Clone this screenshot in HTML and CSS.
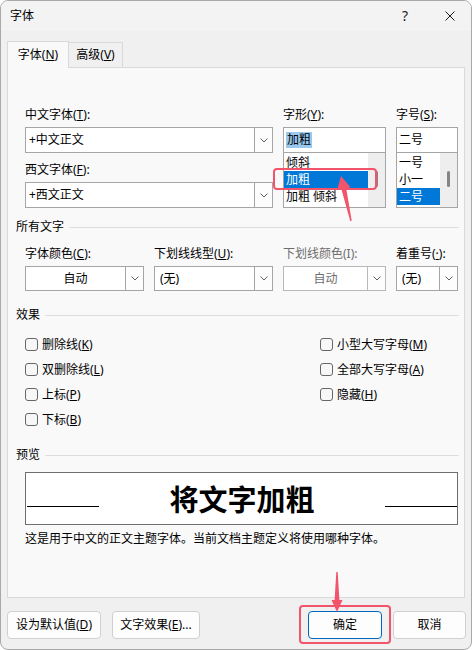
FILE: index.html
```html
<!DOCTYPE html>
<html lang="zh-CN">
<head>
    <meta charset="UTF-8">
    <title>字体</title>
    <link rel="stylesheet" href="styles.css">
</head>
<body>
    <div class="window">
        <div class="titlebar">
            <span class="title">字体</span>
            <div class="caption-btns">
                <span class="cap-btn help">?</span>
                <span class="cap-btn close">
                    <svg width="10" height="10" viewBox="0 0 10 10"><path d="M0.5 0.5 L9.5 9.5 M9.5 0.5 L0.5 9.5" stroke="#1a1a1a" stroke-width="1" fill="none"/></svg>
                </span>
            </div>
        </div>

        <div class="tabs">
            <div class="tab active">字体(<u>N</u>)</div>
            <div class="tab">高级(<u>V</u>)</div>
        </div>

        <div class="panel">
            <!-- 字体 / 字形 / 字号 -->
            <div class="grid top">
                <div class="field span2">
                    <div class="label">中文字体(<u>T</u>):</div>
                    <div class="combo">
                        <span class="value">+中文正文</span>
                        <span class="drop"><svg width="8" height="5" viewBox="0 0 8 5"><path d="M0.5 0.5 L4 4 L7.5 0.5" stroke="#606060" fill="none"/></svg></span>
                    </div>
                    <div class="label second">西文字体(<u>F</u>):</div>
                    <div class="combo">
                        <span class="value">+西文正文</span>
                        <span class="drop"><svg width="8" height="5" viewBox="0 0 8 5"><path d="M0.5 0.5 L4 4 L7.5 0.5" stroke="#606060" fill="none"/></svg></span>
                    </div>
                </div>
                <div class="field">
                    <div class="label">字形(<u>Y</u>):</div>
                    <div class="textbox"><span class="sel">加粗</span></div>
                    <div class="listbox">
                        <div class="items">
                            <div class="item">倾斜</div>
                            <div class="item selected">加粗</div>
                            <div class="item">加粗 倾斜</div>
                        </div>
                        <div class="scroll"><span class="thumb"></span></div>
                    </div>
                </div>
                <div class="field">
                    <div class="label">字号(<u>S</u>):</div>
                    <div class="textbox">二号</div>
                    <div class="listbox">
                        <div class="items">
                            <div class="item">一号</div>
                            <div class="item">小一</div>
                            <div class="item selected">二号</div>
                        </div>
                        <div class="scroll"><span class="thumb"></span></div>
                    </div>
                </div>
            </div>

            <div class="group-title first">所有文字</div>
            <div class="grid mid">
                <div class="field">
                    <div class="label">字体颜色(<u>C</u>):</div>
                    <div class="combo small">
                        <span class="value center">自动</span>
                        <span class="drop"><svg width="8" height="5" viewBox="0 0 8 5"><path d="M0.5 0.5 L4 4 L7.5 0.5" stroke="#606060" fill="none"/></svg></span>
                    </div>
                </div>
                <div class="field">
                    <div class="label">下划线线型(<u>U</u>):</div>
                    <div class="combo small">
                        <span class="value pad">(无)</span>
                        <span class="drop"><svg width="8" height="5" viewBox="0 0 8 5"><path d="M0.5 0.5 L4 4 L7.5 0.5" stroke="#606060" fill="none"/></svg></span>
                    </div>
                </div>
                <div class="field disabled">
                    <div class="label">下划线颜色(I):</div>
                    <div class="combo small">
                        <span class="value center">自动</span>
                        <span class="drop"><svg width="8" height="5" viewBox="0 0 8 5"><path d="M0.5 0.5 L4 4 L7.5 0.5" stroke="#606060" fill="none"/></svg></span>
                    </div>
                </div>
                <div class="field">
                    <div class="label">着重号(<u>·</u>):</div>
                    <div class="combo small">
                        <span class="value pad">(无)</span>
                        <span class="drop"><svg width="8" height="5" viewBox="0 0 8 5"><path d="M0.5 0.5 L4 4 L7.5 0.5" stroke="#606060" fill="none"/></svg></span>
                    </div>
                </div>
            </div>

            <div class="group-title effects">效果</div>
            <div class="checks">
                <label class="check"><span class="box"></span>删除线(<u>K</u>)</label>
                <label class="check"><span class="box"></span>小型大写字母(<u>M</u>)</label>
                <label class="check"><span class="box"></span>双删除线(<u>L</u>)</label>
                <label class="check"><span class="box"></span>全部大写字母(<u>A</u>)</label>
                <label class="check"><span class="box"></span>上标(<u>P</u>)</label>
                <label class="check"><span class="box"></span>隐藏(<u>H</u>)</label>
                <label class="check"><span class="box"></span>下标(<u>B</u>)</label>
            </div>

            <div class="group-title preview-title">预览</div>
            <div class="preview">
                <span class="rule"></span>
                <span class="preview-text">将文字加粗</span>
                <span class="rule"></span>
            </div>
            <div class="caption">这是用于中文的正文主题字体。当前文档主题定义将使用哪种字体。</div>
        </div>

        <div class="buttons">
            <button class="btn w-default">设为默认值(<u>D</u>)</button>
            <button class="btn w-effect">文字效果(<u>E</u>)...</button>
            <button class="btn primary w-ok">确定</button>
            <button class="btn w-cancel">取消</button>
        </div>
    </div>

    <!-- 标注 -->
    <svg class="marks" width="474" height="650" viewBox="0 0 474 650">
        <rect x="274" y="169" width="102" height="20" rx="3" fill="none" stroke="#f2546c" stroke-width="2"/>
        <polygon points="341,176 350.6,187.2 346.2,188.2 351.7,220.8 350.3,221.2 341.4,189.2 337,190.2" fill="#f2546c"/>
        <rect x="300" y="606" width="90" height="37" rx="3" fill="none" stroke="#f2546c" stroke-width="2"/>
        <polygon points="337,612 342.5,600 339.4,600 337.7,572 336.3,572 334.6,600 331.5,600" fill="#f2546c"/>
    </svg>
</body>
</html>
```

FILE: styles.css
```css
* {
    box-sizing: border-box;
}
body {
    margin: 0;
    width: 474px;
    height: 650px;
    position: relative;
    background: #fff;
    font-family: "Noto Sans", "Noto Sans CJK SC", sans-serif;
    font-size: 12px;
    line-height: 16px;
    color: #000;
}
u {
    text-underline-offset: 1px;
}
.window {
    width: 472px;
    height: 650px;
    border: 1px solid #a9a9a9;
    border-radius: 8px;
    background: #f0f0f0;
    overflow: hidden;
    display: flex;
    flex-direction: column;
}
.titlebar {
    height: 30px;
    flex-shrink: 0;
    background: #f3f3f3;
    display: flex;
    align-items: center;
    padding-left: 9px;
}
.caption-btns {
    margin-left: auto;
    display: flex;
    height: 100%;
}
.cap-btn {
    display: flex;
    align-items: center;
    justify-content: center;
    height: 100%;
}
.help {
    width: 48px;
    font-size: 14px;
    color: #1a1a1a;
}
.close {
    width: 42px;
}

/* tabs */
.tabs {
    height: 26px;
    margin-top: 10px;
    padding-left: 6px;
    display: flex;
    align-items: flex-end;
    flex-shrink: 0;
}
.tab {
    height: 25px;
    border: 1px solid #d9d9d9;
    border-bottom: none;
    display: flex;
    align-items: center;
    justify-content: center;
    background: #f0f0f0;
}
.tab.active {
    width: 62px;
    height: 27px;
    margin-bottom: -1px;
    background: #f9f9f9;
    position: relative;
    z-index: 1;
}
.tab + .tab {
    width: 55px;
    margin-left: -1px;
}
.panel {
    margin: 0 6px;
    height: 531px;
    flex-shrink: 0;
    border: 1px solid #d9d9d9;
    background: #f9f9f9;
    padding: 39px 5px 0 8px;
}

/* grids */
.grid {
    display: grid;
    grid-template-columns: 119px 119px 103px 62px;
    column-gap: 10px;
    margin-left: 9px;
}
.field {
    display: flex;
    flex-direction: column;
}
.span2 {
    grid-column: 1 / 3;
}
.label {
    height: 16px;
    margin-bottom: 4px;
    white-space: nowrap;
}
.label.second {
    margin-top: 9px;
}
.combo {
    height: 26px;
    border: 1px solid #a5a5a5;
    background: #fff;
    display: flex;
}
.combo.small {
    height: 25px;
}
.combo .value {
    flex: 1;
    display: flex;
    align-items: center;
    padding-left: 3px;
    white-space: nowrap;
}
.combo .value.center {
    justify-content: center;
    padding-left: 0;
}
.combo .value.pad {
    padding-left: 5px;
}
.combo .drop {
    width: 18px;
    border-left: 1px solid #a5a5a5;
    background: #fdfdfd;
    display: flex;
    align-items: center;
    justify-content: center;
}
.disabled .label,
.disabled .value {
    color: #6d6d6d;
}
.disabled .combo,
.disabled .drop {
    border-color: #b8b8b8;
}
.textbox {
    height: 26px;
    border: 1px solid #a5a5a5;
    background: #fff;
    display: flex;
    align-items: center;
    padding-left: 2px;
}
.sel {
    background: #99c9ef;
    padding: 0 1px;
}
.listbox {
    height: 55px;
    border: 1px solid #a5a5a5;
    border-top: none;
    background: #fff;
    display: flex;
}
.items {
    flex: 1;
    padding-top: 1px;
}
.item {
    height: 17px;
    line-height: 17px;
    padding-left: 2px;
    white-space: nowrap;
}
.item.selected {
    background: #0078d7;
    color: #fff;
}
.scroll {
    width: 17px;
    background: #eeeeee;
    display: flex;
    justify-content: center;
}
.thumb {
    width: 3px;
    height: 16px;
    margin-top: 18px;
    border-radius: 2px;
    background: #858585;
}

/* group titles */
.group-title {
    height: 16px;
    display: flex;
    align-items: center;
}
.group-title::after {
    content: "";
    flex: 1;
    height: 1px;
    background: #dcdcdc;
    margin-left: 5px;
}
.group-title.first {
    margin-top: 11px;
}
.grid.mid {
    margin-top: 11px;
}
.group-title.effects {
    margin-top: 16px;
}
.checks {
    display: grid;
    grid-template-columns: 295px 1fr;
    grid-auto-rows: 25px;
    margin: 9px 0 0 9px;
}
.check {
    display: flex;
    align-items: center;
    white-space: nowrap;
}
.check .box {
    width: 13px;
    height: 13px;
    border: 1px solid #666;
    border-radius: 3px;
    background: #f7f7f7;
    margin-right: 4px;
}
.group-title.preview-title {
    margin-top: 15px;
}
.preview {
    width: 433px;
    height: 53px;
    margin: 9px 0 0 9px;
    border: 1px solid #6e6e6e;
    background: #fff;
    display: flex;
    justify-content: space-between;
    align-items: flex-start;
    padding-left: 1px;
}
.rule {
    width: 72px;
    height: 1px;
    background: #000;
    margin-top: 33px;
}
.preview-text {
    font-family: "Noto Sans CJK SC", sans-serif;
    font-size: 29px;
    font-weight: bold;
    line-height: 51px;
}
.caption {
    margin: 6px 0 0 9px;
    white-space: nowrap;
}

/* bottom buttons */
.buttons {
    display: flex;
    margin-top: 13px;
    padding: 0 5px 0 6px;
    height: 28px;
}
.btn {
    height: 28px;
    border: 1px solid #d0d0d0;
    border-radius: 4px;
    background: #fdfdfd;
    font: inherit;
    color: #000;
    padding: 0;
    white-space: nowrap;
}
.w-default {
    width: 94px;
}
.w-effect {
    width: 88px;
    margin-left: 11px;
}
.w-ok {
    width: 74px;
    margin-left: auto;
}
.w-cancel {
    width: 73px;
    margin-left: 11px;
}
.btn.primary {
    border-color: #0067c0;
}
.marks {
    position: absolute;
    left: 0;
    top: 0;
    pointer-events: none;
}
```
